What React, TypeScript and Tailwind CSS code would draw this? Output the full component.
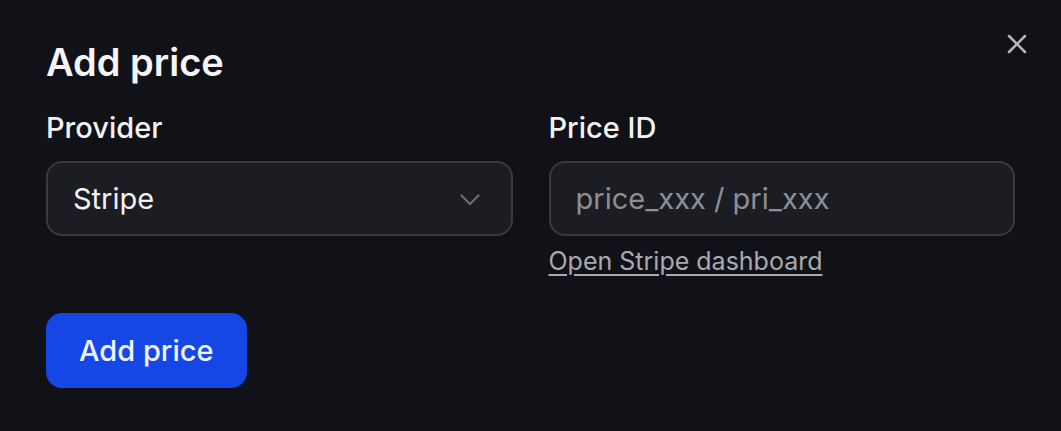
import { X } from "lucide-react";

export default function App() {
  return (
    <div
      className="w-[1061px] h-[431px] bg-[#111217] text-white relative"
      style={{ fontFamily: "Inter, 'Noto Sans', sans-serif" }}
    >
      <button className="absolute right-[28px] top-[28px] text-[#b4b5ba]">
        <X size={32} strokeWidth={1.9} />
      </button>
      <div className="px-[46px] pt-[38px]">
        <h2 className="text-[38px] leading-[48px] font-semibold text-[#f5f5f7]">Add price</h2>
        <div className="mt-[22px] grid grid-cols-2 gap-[36px] w-[969px]">
          <div className="flex flex-col">
            <label className="text-[29px] leading-[40px] font-medium text-[#f2f2f4]">Provider</label>
            <div className="mt-[13px] h-[75px] rounded-[16px] border-2 border-[#393a40] bg-[#1c1d22] flex items-center justify-between pl-[25px] pr-[31px]">
              <span className="text-[29px] text-[#f2f2f4]">Stripe</span>
              <svg width="20" height="12" viewBox="0 0 20 12" fill="none" className="mt-[2px]">
                <path d="M1.5 1.5 10 10 18.5 1.5" stroke="#6c6d73" strokeWidth="2.2" strokeLinecap="round" strokeLinejoin="round" />
              </svg>
            </div>
          </div>
          <div className="flex flex-col">
            <label className="text-[29px] leading-[40px] font-medium text-[#f2f2f4]">Price ID</label>
            <div className="mt-[13px] h-[75px] rounded-[16px] border-2 border-[#393a40] bg-[#1c1d22] flex items-center pl-[25px]">
              <span className="text-[29px] text-[#8e8f95]">price_xxx / pri_xxx</span>
            </div>
            <a className="mt-[9px] self-start text-[25px] leading-[32px] text-[#a9aaaf] underline underline-offset-[4px]">
              Open Stripe dashboard
            </a>
          </div>
        </div>
        <button className="mt-[36px] h-[75px] px-[33px] rounded-[16px] bg-[#1547e6] text-[29px] font-medium text-[#eef2ff]">
          Add price
        </button>
      </div>
    </div>
  );
}
